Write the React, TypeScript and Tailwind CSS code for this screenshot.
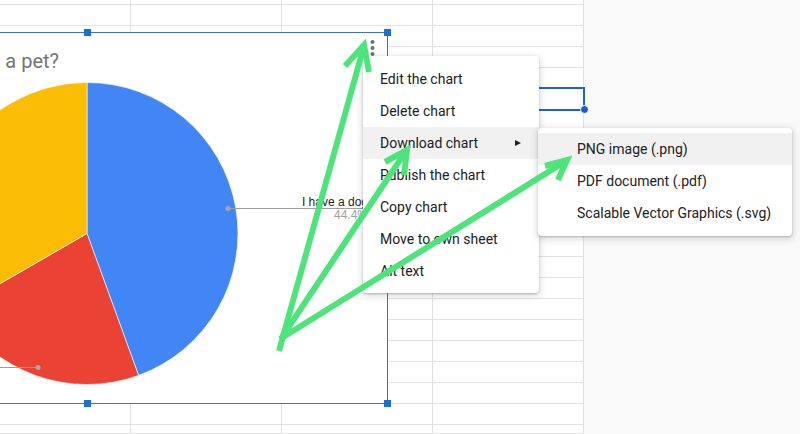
import React from 'react'

const rowHeights = [5, ...Array(20).fill(21), 9]
const colWidths = ['w-[131px]', 'w-[151px]', 'w-[151px]', 'w-[151px]']

const menuItems = [
  'Edit the chart',
  'Delete chart',
  'Download chart',
  'Publish the chart',
  'Copy chart',
  'Move to own sheet',
  'Alt text',
]

const subItems = ['PNG image (.png)', 'PDF document (.pdf)', 'Scalable Vector Graphics (.svg)']

function Sheet() {
  return (
    <div className="flex h-full">
      <div className="flex flex-col bg-white">
        {rowHeights.map((h, i) => (
          <div key={i} className="flex" style={{ height: h }}>
            {colWidths.map((w, j) => (
              <div key={j} className={`${w} h-full border-r border-b border-[#e2e2e2]`} />
            ))}
          </div>
        ))}
      </div>
      <div className="flex-1 bg-[#f8f9f8]" />
    </div>
  )
}

function Handle({ className }: { className: string }) {
  return <div className={`absolute w-[7px] h-[7px] bg-[#1a6fd8] ${className}`} />
}

function Chart() {
  return (
    <div className="absolute left-[-213px] top-[32px] w-[601px] h-[372px] border border-[#3e6fc0] bg-white">
      <div className="pt-[16px] pr-[328px] text-right text-[20px] leading-6 text-[#757575] font-['Roboto',sans-serif]">
        Do you have a pet?
      </div>
      <svg className="absolute inset-0" width="599" height="370" viewBox="0 0 599 370">
        {/* blue 0-160 */}
        <path d="M299 200.5 L299 49.5 A151 151 0 0 1 350.6 342.4 Z" fill="#4285f4" stroke="#ffffff" strokeWidth="0.6" />
        {/* red 160-240 */}
        <path d="M299 200.5 L350.6 342.4 A151 151 0 0 1 168.2 276 Z" fill="#ea4335" stroke="#ffffff" strokeWidth="0.6" />
        {/* yellow 240-360 */}
        <path d="M299 200.5 L168.2 276 A151 151 0 0 1 299 49.5 Z" fill="#fbbc04" stroke="#ffffff" strokeWidth="0.6" />

        <line x1="440" y1="175.5" x2="576" y2="175.5" stroke="#9e9e9e" strokeWidth="1" />
        <circle cx="440" cy="175.5" r="2.5" fill="#a8a8a8" />
        <text x="580" y="173" textAnchor="end" fontSize="12" fill="#222222" fontFamily="Liberation Sans, Arial, sans-serif">
          I have a dog
        </text>
        <text x="580" y="186" textAnchor="end" fontSize="12" fill="#a0a0a0" fontFamily="Liberation Sans, Arial, sans-serif">
          44.4%
        </text>

        <line x1="120" y1="334.5" x2="250" y2="334.5" stroke="#9e9e9e" strokeWidth="1" />
        <circle cx="250" cy="334.5" r="2.5" fill="#a8a8a8" />

        <circle cx="584.5" cy="9" r="2" fill="#6f6f6f" />
        <circle cx="584.5" cy="15" r="2" fill="#6f6f6f" />
        <circle cx="584.5" cy="21" r="2" fill="#6f6f6f" />
      </svg>
      <Handle className="left-[296px] top-[-4px]" />
      <Handle className="right-[-4px] top-[-4px]" />
      <Handle className="right-[-4px] top-[181px]" />
      <Handle className="left-[296px] bottom-[-4px]" />
      <Handle className="right-[-4px] bottom-[-4px]" />
    </div>
  )
}

function Menu() {
  return (
    <div className="absolute left-[363px] top-[56px] w-[176px] pt-[7px] pb-[6px] bg-white rounded-[4px] shadow-[0_2px_6px_2px_rgba(60,64,67,0.15),0_1px_2px_rgba(60,64,67,0.3)] font-['Roboto',sans-serif]">
      {menuItems.map((item) => (
        <div
          key={item}
          className={`flex items-center h-8 pl-[17px] pr-[18px] text-[14px] text-[#202124] ${
            item === 'Download chart' ? 'bg-[#f1f1f1]' : ''
          }`}
        >
          <span className="flex-1">{item}</span>
          {item === 'Download chart' && (
            <svg width="6" height="6" viewBox="0 0 6 6">
              <polygon points="0,0 6,3 0,6" fill="#202124" />
            </svg>
          )}
        </div>
      ))}
    </div>
  )
}

function SubMenu() {
  return (
    <div className="absolute left-[538px] top-[128px] w-[254px] pt-[5px] pb-[7px] bg-white rounded-[4px] shadow-[0_2px_6px_2px_rgba(60,64,67,0.15),0_1px_2px_rgba(60,64,67,0.3)] font-['Roboto',sans-serif]">
      {subItems.map((item, i) => (
        <div
          key={item}
          className={`flex items-center h-8 pl-[39px] text-[14px] text-[#202124] ${i === 0 ? 'bg-[#f1f1f1]' : ''}`}
        >
          {item}
        </div>
      ))}
    </div>
  )
}

function Arrows() {
  const green = '#4ee37b'
  return (
    <svg className="absolute inset-0 pointer-events-none" width="800" height="434" viewBox="0 0 800 434">
      <g stroke={green} strokeWidth="6" fill="none" strokeLinejoin="miter">
        <line x1="279" y1="351" x2="364" y2="46" />
        <polyline points="345,66 364,45 369,72" />
        <line x1="282" y1="337" x2="406" y2="151" />
        <polyline points="385,162 407,150 404,175" />
        <line x1="280" y1="339" x2="566" y2="161" />
        <polyline points="545,166 567,160 558,180" />
      </g>
    </svg>
  )
}

export default function App() {
  return (
    <div className="relative w-[800px] h-[434px] overflow-hidden bg-white">
      <Sheet />
      <div className="absolute left-[431px] top-[87px] w-[154px] h-[24px] border-2 border-[#1d63cc]" />
      <div className="absolute left-[580px] top-[105px] w-[9px] h-[9px] rounded-full bg-[#1a5ccc] border border-white" />
      <Chart />
      <Menu />
      <SubMenu />
      <Arrows />
    </div>
  )
}
